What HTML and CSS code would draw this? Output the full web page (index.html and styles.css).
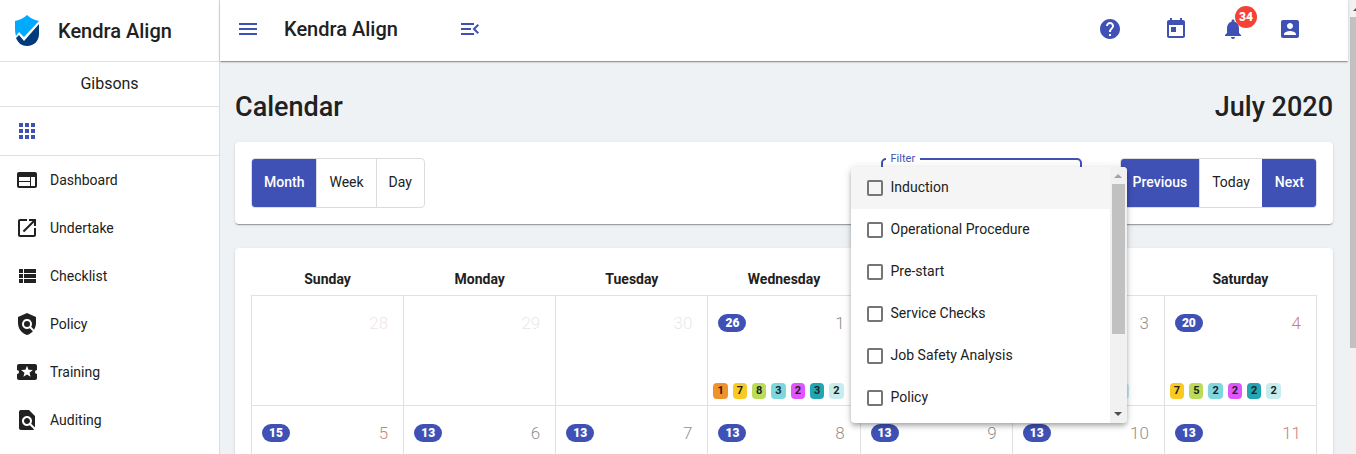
FILE: index.html
```html
<!DOCTYPE html>
<html lang="en">
<head>
  <meta charset="UTF-8">
  <meta name="viewport" content="width=device-width, initial-scale=1.0">
  <title>Kendra Align</title>
  <link rel="stylesheet" href="styles.css">
</head>
<body>
  <div class="wrap">
    <aside class="sidebar">
      <div class="brand">
        <svg class="logo" viewBox="0 0 24 32">
          <path fill="#00aaff" d="M12 0c3 3 7 5 12 6L9 22l-5-5-3 4C0 18 0 15 0 12V6c5-1 9-3 12-6z"/>
          <path fill="#003a7d" d="M24 9v10c0 7-5 12-12 12C7 31 3 28 1 23l3-3 5 6z"/>
        </svg>
        <span class="title">Kendra Align</span>
      </div>
      <div class="company">Gibsons</div>
      <div class="apps">
        <button class="icon-btn" aria-label="Apps">
          <svg class="icon" viewBox="0 0 24 24"><path d="M4 8h4V4H4v4zm6 12h4v-4h-4v4zm-6 0h4v-4H4v4zm0-6h4v-4H4v4zm6 0h4v-4h-4v4zm6-10v4h4V4h-4zm-6 4h4V4h-4v4zm6 6h4v-4h-4v4zm0 6h4v-4h-4v4z"/></svg>
        </button>
      </div>
      <nav class="nav">
        <a href="#">
          <svg class="icon" viewBox="0 0 24 24"><path d="M20 4H4c-1.1 0-1.99.9-1.99 2L2 18c0 1.1.9 2 2 2h16c1.1 0 2-.9 2-2V6c0-1.1-.9-2-2-2zm-5 14H4v-4h11v4zm0-5H4V9h11v4zm5 5h-4V9h4v9z"/></svg>
          <span>Dashboard</span>
        </a>
        <a href="#">
          <svg class="icon" viewBox="0 0 24 24"><path d="M19 19H5V5h7V3H5c-1.11 0-2 .9-2 2v14c0 1.1.89 2 2 2h14c1.1 0 2-.9 2-2v-7h-2v7zM14 3v2h3.59l-9.83 9.83 1.41 1.41L19 6.41V10h2V3h-7z"/></svg>
          <span>Undertake</span>
        </a>
        <a href="#">
          <svg class="icon" viewBox="0 0 24 24"><path d="M4 14h4v-4H4v4zm0 5h4v-4H4v4zM4 9h4V5H4v4zm5 5h12v-4H9v4zm0 5h12v-4H9v4zM9 5v4h12V5H9z"/></svg>
          <span>Checklist</span>
        </a>
        <a href="#">
          <svg class="icon" viewBox="0 0 24 24"><path d="M21 5l-9-4-9 4v6c0 5.55 3.84 10.74 9 12 2.3-.56 4.33-1.9 5.88-3.71l-3.12-3.12c-1.94 1.29-4.58 1.07-6.29-.64-1.95-1.95-1.95-5.12 0-7.07 1.95-1.95 5.12-1.95 7.07 0 1.71 1.71 1.92 4.35.64 6.29l2.9 2.9C20.29 15.69 21 13.38 21 11V5z"/><circle cx="12" cy="12" r="3"/></svg>
          <span>Policy</span>
        </a>
        <a href="#">
          <svg class="icon" viewBox="0 0 24 24"><path d="M20 12c0-1.1.9-2 2-2V6c0-1.1-.9-2-2-2H4c-1.1 0-1.99.9-1.99 2v4c1.1 0 1.99.9 1.99 2s-.89 2-2 2v4c0 1.1.9 2 2 2h16c1.1 0 2-.9 2-2v-4c-1.1 0-2-.9-2-2zm-4.42 4.8L12 14.5l-3.58 2.3 1.08-4.12-3.29-2.69 4.24-.25L12 5.8l1.54 3.95 4.24.25-3.29 2.69 1.09 4.11z"/></svg>
          <span>Training</span>
        </a>
        <a href="#">
          <svg class="icon" viewBox="0 0 24 24"><path d="M20 19.59V8l-6-6H6c-1.1 0-1.99.9-1.99 2L4 20c0 1.1.89 2 1.99 2H18c.45 0 .85-.15 1.19-.4l-4.43-4.43c-.8.52-1.74.83-2.76.83-2.76 0-5-2.24-5-5s2.24-5 5-5 5 2.24 5 5c0 1.02-.31 1.96-.83 2.75L20 19.59zM9 13c0 1.66 1.34 3 3 3s3-1.34 3-3-1.34-3-3-3-3 1.34-3 3z"/></svg>
          <span>Auditing</span>
        </a>
      </nav>
    </aside>

    <div class="main">
      <header class="topbar">
        <button class="icon-btn" aria-label="Menu">
          <svg class="icon" viewBox="0 0 24 24"><path d="M3 18h18v-2H3v2zm0-5h18v-2H3v2zm0-7v2h18V6H3z"/></svg>
        </button>
        <span class="title">Kendra Align</span>
        <button class="icon-btn collapse" aria-label="Collapse menu">
          <svg class="icon" viewBox="0 0 24 24"><path d="M3 18h13v-2H3v2zm0-5h10v-2H3v2zm0-7v2h13V6H3zm18 9.59L17.42 12 21 8.41 19.59 7l-5 5 5 5L21 15.59z"/></svg>
        </button>
        <div class="actions">
          <button class="icon-btn help" aria-label="Help">
            <svg class="icon" viewBox="0 0 24 24"><path d="M12 2C6.48 2 2 6.48 2 12s4.48 10 10 10 10-4.48 10-10S17.52 2 12 2zm1 17h-2v-2h2v2zm2.07-7.75l-.9.92C13.45 12.9 13 13.5 13 15h-2v-.5c0-1.1.45-2.1 1.17-2.83l1.24-1.26c.37-.36.59-.86.59-1.41 0-1.1-.9-2-2-2s-2 .9-2 2H8c0-2.21 1.79-4 4-4s4 1.79 4 4c0 .88-.36 1.68-.93 2.25z"/></svg>
          </button>
          <button class="icon-btn" aria-label="Calendar">
            <svg class="icon" viewBox="0 0 24 24"><path d="M19 3h-1V1h-2v2H8V1H6v2H5c-1.11 0-1.99.9-1.99 2L3 19c0 1.1.89 2 2 2h14c1.1 0 2-.9 2-2V5c0-1.1-.9-2-2-2zm0 16H5V8h14v11zM7 10h5v5H7z"/></svg>
          </button>
          <button class="icon-btn" aria-label="Notifications">
            <svg class="icon" viewBox="0 0 24 24"><path d="M12 22c1.1 0 2-.9 2-2h-4c0 1.1.89 2 2 2zm6-6v-5c0-3.07-1.64-5.64-4.5-6.32V4c0-.83-.67-1.5-1.5-1.5s-1.5.67-1.5 1.5v.68C7.63 5.36 6 7.92 6 11v5l-2 2v1h16v-1l-2-2z"/></svg>
            <span class="count">34</span>
          </button>
          <button class="icon-btn" aria-label="Account">
            <svg class="icon" viewBox="0 0 24 24"><path d="M3 5v14c0 1.1.89 2 2 2h14c1.1 0 2-.9 2-2V5c0-1.1-.9-2-2-2H5c-1.11 0-2 .9-2 2zm12 4c0 1.66-1.34 3-3 3s-3-1.34-3-3 1.34-3 3-3 3 1.34 3 3zm-9 8c0-2 4-3.1 6-3.1s6 1.1 6 3.1v1H6v-1z"/></svg>
          </button>
        </div>
      </header>

      <div class="content">
        <div class="heading">
          <h1>Calendar</h1>
          <h1>July 2020</h1>
        </div>

        <div class="card toolbar">
          <div class="btn-group">
            <button class="active">Month</button>
            <button>Week</button>
            <button>Day</button>
          </div>
          <div class="filter">
            <fieldset>
              <legend><label for="filter">Filter</label></legend>
              <select id="filter"><option value=""></option></select>
            </fieldset>
            <div class="panel">
              <div class="options">
                <label class="hover"><input type="checkbox">Induction</label>
                <label><input type="checkbox">Operational Procedure</label>
                <label><input type="checkbox">Pre-start</label>
                <label><input type="checkbox">Service Checks</label>
                <label><input type="checkbox">Job Safety Analysis</label>
                <label><input type="checkbox">Policy</label>
              </div>
              <div class="scroll">
                <i class="up"></i>
                <i class="thumb"></i>
                <i class="down"></i>
              </div>
            </div>
          </div>
          <div class="btn-group">
            <button class="active">Previous</button>
            <button>Today</button>
            <button class="active">Next</button>
          </div>
        </div>

        <div class="card">
          <table class="month">
            <thead>
              <tr>
                <th>Sunday</th>
                <th>Monday</th>
                <th>Tuesday</th>
                <th>Wednesday</th>
                <th>Thursday</th>
                <th>Friday</th>
                <th>Saturday</th>
              </tr>
            </thead>
            <tbody>
              <tr>
                <td class="out weekend"><div class="cell"><div class="top"><span class="num">28</span></div></div></td>
                <td class="out"><div class="cell"><div class="top"><span class="num">29</span></div></div></td>
                <td class="out"><div class="cell"><div class="top"><span class="num">30</span></div></div></td>
                <td>
                  <div class="cell">
                    <div class="top"><span class="badge">26</span><span class="num">1</span></div>
                    <div class="chips"><span class="orange">1</span><span class="yellow">7</span><span class="green">8</span><span class="sky">3</span><span class="pink">2</span><span class="teal">3</span><span class="pale">2</span></div>
                  </div>
                </td>
                <td>
                  <div class="cell">
                    <div class="top"><span class="badge">20</span><span class="num">2</span></div>
                  </div>
                </td>
                <td>
                  <div class="cell">
                    <div class="top"><span class="badge">20</span><span class="num">3</span></div>
                    <div class="chips"><span class="yellow">7</span><span class="green">5</span><span class="sky">2</span><span class="pink">2</span><span class="teal">2</span><span class="pale">2</span></div>
                  </div>
                </td>
                <td class="weekend">
                  <div class="cell">
                    <div class="top"><span class="badge">20</span><span class="num">4</span></div>
                    <div class="chips"><span class="yellow">7</span><span class="green">5</span><span class="sky">2</span><span class="pink">2</span><span class="teal">2</span><span class="pale">2</span></div>
                  </div>
                </td>
              </tr>
              <tr>
                <td class="weekend"><div class="cell"><div class="top"><span class="badge">15</span><span class="num">5</span></div></div></td>
                <td><div class="cell"><div class="top"><span class="badge">13</span><span class="num">6</span></div></div></td>
                <td><div class="cell"><div class="top"><span class="badge">13</span><span class="num">7</span></div></div></td>
                <td><div class="cell"><div class="top"><span class="badge">13</span><span class="num">8</span></div></div></td>
                <td><div class="cell"><div class="top"><span class="badge">13</span><span class="num">9</span></div></div></td>
                <td><div class="cell"><div class="top"><span class="badge">13</span><span class="num">10</span></div></div></td>
                <td class="weekend"><div class="cell"><div class="top"><span class="badge">13</span><span class="num">11</span></div></div></td>
              </tr>
            </tbody>
          </table>
        </div>
      </div>
    </div>

    <div class="scroll page-scroll">
      <i class="up"></i>
      <i class="thumb"></i>
    </div>
  </div>
</body>
</html>
```
FILE: styles.css
```css
html, body{
  height: 100%;
  margin: 0;
  padding: 0;
}
body{
  overflow: hidden;
  font-family: Roboto, "Liberation Sans", sans-serif;
  font-size: 14px;
  color: #212121;
  background-color: #eef2f5;
}
*{
  box-sizing: border-box;
}
button{
  font: inherit;
  color: inherit;
  border: 0;
  padding: 0;
  background: none;
  cursor: pointer;
}
.wrap{
  height: 100%;
  display: flex;
}
.icon{
  display: block;
  width: 24px;
  height: 24px;
  fill: currentColor;
}
.icon-btn{
  position: relative;
  color: #3f51b5;
}
.title{
  font-size: 20px;
  font-weight: 500;
}

/* sidebar */
.sidebar{
  width: 220px;
  flex-shrink: 0;
  background-color: #fff;
  border-right: 1px solid #dcdcdc;
}
.brand, .company, .apps{
  display: flex;
  align-items: center;
  border-bottom: 1px solid #e0e0e0;
}
.brand{
  height: 62px;
  padding-left: 15px;
  gap: 19px;
}
.logo{
  width: 24px;
  height: 32px;
}
.company{
  height: 45px;
  padding-bottom: 2px;
  justify-content: center;
  font-size: 16px;
}
.apps{
  height: 49px;
  padding-left: 15px;
}
.nav a{
  height: 48px;
  padding-left: 15px;
  display: flex;
  align-items: center;
  gap: 11px;
  color: inherit;
  text-decoration: none;
}

/* top bar */
.main{
  flex: 1;
  min-width: 0;
}
.topbar{
  position: relative;
  height: 61px;
  padding: 0 46px 3px 16px;
  display: flex;
  align-items: center;
  background-color: #fff;
}
.topbar, .card{
  box-shadow: 0 2px 1px -1px rgba(0,0,0,.2), 0 1px 1px 0 rgba(0,0,0,.14), 0 1px 3px 0 rgba(0,0,0,.12);
}
.topbar .title{
  margin-left: 24px;
}
.collapse{
  margin-left: 60px;
}
.actions{
  margin-left: auto;
  display: flex;
  gap: 33px;
}
.help{
  margin-right: 9px;
}
.count{
  position: absolute;
  top: -11px;
  left: 14px;
  width: 22px;
  height: 22px;
  line-height: 22px;
  border-radius: 50%;
  background-color: #f44336;
  color: #fff;
  font-size: 12px;
  font-weight: 900;
  text-align: center;
}

/* content */
.content{
  padding: 0 15px;
}
.heading{
  display: flex;
  justify-content: space-between;
  align-items: center;
  height: 81px;
  padding-top: 10px;
}
h1{
  margin: 0;
  font-size: 27px;
  font-weight: 500;
}
.card{
  padding: 16px;
  margin-bottom: 24px;
  border-radius: 4px;
  background-color: #fff;
}
.toolbar{
  display: flex;
}
.btn-group{
  display: flex;
  height: 50px;
  border: 1px solid #dcdcdc;
  border-radius: 4px;
  overflow: hidden;
}
.btn-group button{
  padding: 0 12px 2px;
}
.btn-group button + button{
  border-left: 1px solid #dcdcdc;
}
.btn-group .active{
  background-color: #3f51b5;
  color: #fff;
  font-weight: 500;
}
.btn-group button + .active{
  border-color: #3f51b5;
}

/* filter */
.filter{
  position: relative;
  width: 201px;
  margin-left: auto;
  margin-right: 38px;
}
fieldset{
  height: 56px;
  margin: -6px 0 0;
  padding: 0 3px;
  border: 2px solid #3f51b5;
  border-radius: 5px;
}
legend{
  padding: 0 5px;
  font-size: 11px;
  line-height: 14px;
  color: #3f51b5;
}
select{
  width: 100%;
  border: 0;
  background: none;
}
.panel{
  position: absolute;
  z-index: 1;
  top: 9px;
  left: -30px;
  width: 276px;
  height: 256px;
  display: flex;
  border-radius: 4px;
  overflow: hidden;
  background-color: #fff;
  box-shadow: 0 2px 4px -1px rgba(0,0,0,.2), 0 4px 5px 0 rgba(0,0,0,.14), 0 1px 10px 0 rgba(0,0,0,.12);
}
.options{
  flex: 1;
}
.options label{
  display: flex;
  align-items: center;
  gap: 8px;
  height: 42px;
  padding: 0 0 2px 16px;
}
.options .hover{
  background-color: #f5f5f5;
}
.options input{
  appearance: none;
  width: 16px;
  height: 16px;
  margin: 2px 0 0;
  border: 2px solid #757575;
  border-radius: 2px;
}
.scroll{
  width: 17px;
  padding: 0 2px;
  display: flex;
  flex-direction: column;
  background-color: #f1f1f1;
}
.scroll .up, .scroll .down{
  width: 8px;
  height: 4px;
  align-self: center;
  background-color: #a3a3a3;
  clip-path: polygon(50% 0, 100% 100%, 0 100%);
}
.scroll .up{
  margin: 7px 0 6px;
}
.scroll .down{
  margin: auto 0 7px;
  background-color: #505050;
  clip-path: polygon(0 0, 100% 0, 50% 100%);
}
.scroll .thumb{
  height: 150px;
  background-color: #c1c1c1;
}
.page-scroll{
  width: 8px;
  padding: 0 0 0 2px;
  flex-shrink: 0;
  overflow: hidden;
}
.page-scroll .up{
  flex-shrink: 0;
  align-self: flex-start;
  margin-left: 3px;
  background-color: #505050;
}
.page-scroll .thumb{
  height: 73%;
}

/* month table */
.month{
  width: 100%;
  table-layout: fixed;
  border-collapse: collapse;
}
.month th{
  height: 31px;
  padding: 0;
  font-weight: 700;
}
.month td{
  padding: 0;
  border: 1px solid #e1e1e1;
}
.cell{
  height: 109px;
  display: flex;
  flex-direction: column;
  justify-content: space-between;
}
.top{
  display: flex;
  align-items: center;
  padding: 17px 15px 0 10px;
}
.badge{
  min-width: 28px;
  height: 18px;
  line-height: 18px;
  border-radius: 9px;
  background-color: #3f51b5;
  color: #fff;
  font-size: 12px;
  font-weight: 900;
  text-align: center;
}
.num{
  margin-left: auto;
  font-size: 17px;
  font-weight: 300;
  line-height: 20px;
  opacity: .5;
}
.weekend .num{
  color: #8b0000;
}
.out .num{
  opacity: .1;
}
.chips{
  display: flex;
  gap: 5px;
  padding: 0 0 6px 5px;
}
.chips span{
  padding: 0 4px;
  font-size: 11px;
  font-weight: 700;
  line-height: 16px;
  border-radius: 4px;
}
.orange{
  background-color: #f0932b;
}
.yellow{
  background-color: #f9ca24;
}
.green{
  background-color: #badc58;
}
.sky{
  background-color: #7ed6df;
}
.pink{
  background-color: #e056fd;
}
.teal{
  background-color: #22a6b3;
}
.pale{
  background-color: #c7ecee;
}
```
